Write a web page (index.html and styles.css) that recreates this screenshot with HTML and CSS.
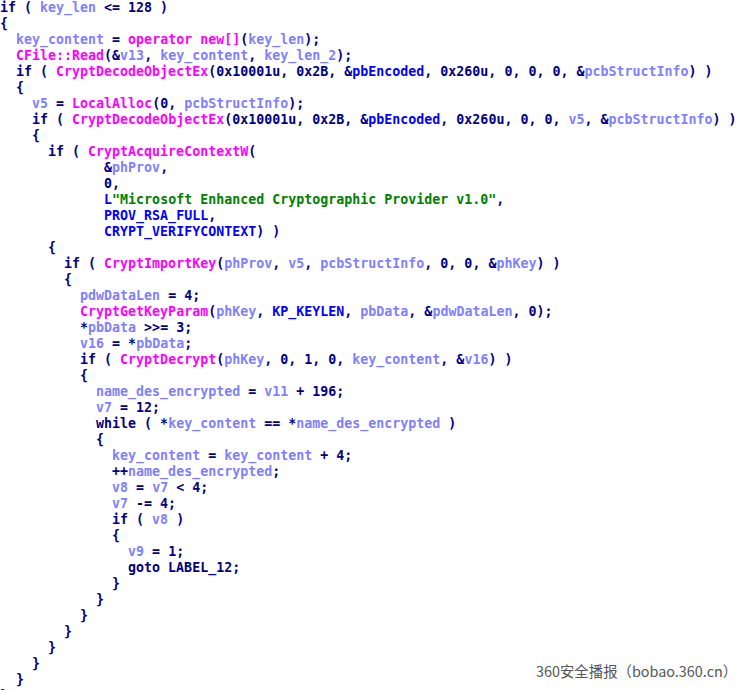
FILE: index.html
```html
<!DOCTYPE html>
<html>
<head>
<meta charset="utf-8">
<link rel="stylesheet" href="styles.css">
</head>
<body>
<div class="page">
<pre class="code">if ( <span class="v">key_len</span> &lt;= 128 )
{
  <span class="v">key_content</span> = <span class="f">operator new[]</span>(<span class="v">key_len</span>);
  <span class="f">CFile::Read</span>(&amp;<span class="v">v13</span>, <span class="v">key_content</span>, <span class="v">key_len_2</span>);
  if ( <span class="f">CryptDecodeObjectEx</span>(0x10001u, 0x2B, &amp;<span class="c">pbEncoded</span>, 0x260u, 0, 0, 0, &amp;<span class="v">pcbStructInfo</span>) )
  {
    <span class="v">v5</span> = <span class="f">LocalAlloc</span>(0, <span class="v">pcbStructInfo</span>);
    if ( <span class="f">CryptDecodeObjectEx</span>(0x10001u, 0x2B, &amp;<span class="c">pbEncoded</span>, 0x260u, 0, 0, <span class="v">v5</span>, &amp;<span class="v">pcbStructInfo</span>) )
    {
      if ( <span class="f">CryptAcquireContextW</span>(
             &amp;<span class="v">phProv</span>,
             0,
             <span class="c">L</span><span class="s">"Microsoft Enhanced Cryptographic Provider v1.0"</span>,
             <span class="c">PROV_RSA_FULL</span>,
             <span class="c">CRYPT_VERIFYCONTEXT</span>) )
      {
        if ( <span class="f">CryptImportKey</span>(<span class="v">phProv</span>, <span class="v">v5</span>, <span class="v">pcbStructInfo</span>, 0, 0, &amp;<span class="v">phKey</span>) )
        {
          <span class="v">pdwDataLen</span> = 4;
          <span class="f">CryptGetKeyParam</span>(<span class="v">phKey</span>, <span class="c">KP_KEYLEN</span>, <span class="v">pbData</span>, &amp;<span class="v">pdwDataLen</span>, 0);
          *<span class="v">pbData</span> &gt;&gt;= 3;
          <span class="v">v16</span> = *<span class="v">pbData</span>;
          if ( <span class="f">CryptDecrypt</span>(<span class="v">phKey</span>, 0, 1, 0, <span class="v">key_content</span>, &amp;<span class="v">v16</span>) )
          {
            <span class="v">name_des_encrypted</span> = <span class="v">v11</span> + 196;
            <span class="v">v7</span> = 12;
            while ( *<span class="v">key_content</span> == *<span class="v">name_des_encrypted</span> )
            {
              <span class="v">key_content</span> = <span class="v">key_content</span> + 4;
              ++<span class="v">name_des_encrypted</span>;
              <span class="v">v8</span> = <span class="v">v7</span> &lt; 4;
              <span class="v">v7</span> -= 4;
              if ( <span class="v">v8</span> )
              {
                <span class="v">v9</span> = 1;
                goto LABEL_12;
              }
            }
          }
        }
      }
    }
  }
}</pre>
<div class="watermark">360安全播报（bobao.360.cn）</div>
</div>
</body>
</html>
```

FILE: styles.css
```css
html, body {
  margin: 0;
  padding: 0;
  background: #ffffff;
}
.page {
  position: relative;
  width: 744px;
  height: 690px;
  overflow: hidden;
  background: #ffffff;
}
.code {
  margin: 0;
  padding: 0;
  font-family: "DejaVu Sans Mono", "Liberation Mono", monospace;
  font-weight: bold;
  font-size: 13.3px;
  line-height: 16px;
  color: #000080;
  white-space: pre;
}
.v { color: #8080ff; }
.f { color: #ff00ff; }
.c { color: #0000ff; }
.s { color: #008000; }
.watermark {
  position: absolute;
  left: 536px;
  top: 661px;
  font-family: "Noto Sans CJK SC", "Noto Sans", sans-serif;
  font-size: 14.4px;
  line-height: 20px;
  color: #555555;
  white-space: nowrap;
}
```
